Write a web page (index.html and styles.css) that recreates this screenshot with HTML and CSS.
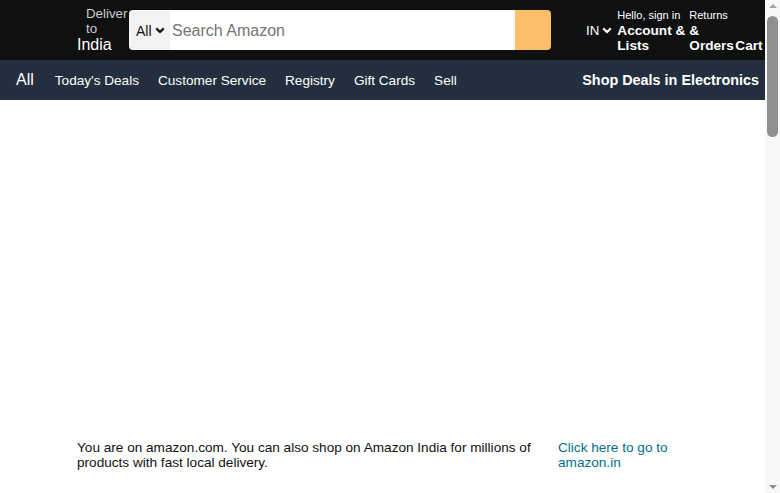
FILE: index.html
```html
<!DOCTYPE html>
<html lang="en">
<head>
<meta charset="utf-8">
<title>Amazon</title>
<link rel="stylesheet" href="styles.css">
</head>
<body>
<div class="viewport">
<div class="page">
<header class="top">
  <div class="deliver">
    <div class="deliver-line1">Deliver to</div>
    <div class="deliver-line2">India</div>
  </div>
  <form class="search">
    <div class="search-dept">All
      <svg class="chev" width="10" height="7" viewBox="0 0 10 7"><path d="M1.2 1.4 L5 5 L8.8 1.4" fill="none" stroke="#111" stroke-width="2.2"/></svg>
    </div>
    <input class="search-input" type="text" placeholder="Search Amazon">
    <div class="search-btn"></div>
  </form>
  <div class="lang">IN
    <svg class="chev" width="10" height="7" viewBox="0 0 10 7"><path d="M1.2 1.4 L5 5 L8.8 1.4" fill="none" stroke="#fff" stroke-width="2.2"/></svg>
  </div>
  <div class="tool account">
    <span class="tool-small">Hello, sign in</span>
    <span class="tool-big">Account &amp; Lists</span>
  </div>
  <div class="tool returns">
    <span class="tool-small">Returns</span>
    <span class="tool-big">&amp; Orders</span>
  </div>
  <div class="cart">Cart</div>
</header>
<nav class="subnav">
  <span class="nav-all">All</span>
  <a class="nav-link">Today's Deals</a>
  <a class="nav-link">Customer Service</a>
  <a class="nav-link">Registry</a>
  <a class="nav-link">Gift Cards</a>
  <a class="nav-link">Sell</a>
  <span class="nav-promo">Shop Deals in Electronics</span>
</nav>
<main class="main">
  <section class="redirect">
    <p class="redirect-text">You are on amazon.com. You can also shop on Amazon India for millions of products with fast local delivery.</p>
    <a class="redirect-link">Click here to go to amazon.in</a>
  </section>
</main>
</div>
<div class="scrollbar">
  <span class="sb-btn sb-up"></span>
  <div class="sb-track"><div class="sb-thumb"></div></div>
  <span class="sb-btn sb-down"></span>
</div>
</div>
</body>
</html>
```
FILE: styles.css
```css
html, body {
  margin: 0;
  padding: 0;
  height: 100%;
  overflow: hidden;
}
body {
  font-family: "Liberation Sans", Arial, sans-serif;
  background: #fff;
}
.viewport {
  display: flex;
  height: 100vh;
  overflow: hidden;
}
.page {
  flex: 1;
  min-width: 0;
  overflow: hidden;
}
.scrollbar {
  width: 15px;
  flex: none;
  background: #f8f8f8;
  display: flex;
  flex-direction: column;
}
.sb-btn {
  height: 15px;
  flex: none;
  display: flex;
  justify-content: center;
  padding-left: 1px;
}
.sb-up {
  align-items: flex-start;
  padding-top: 4px;
  box-sizing: border-box;
}
.sb-down {
  align-items: flex-end;
  padding-bottom: 4px;
  box-sizing: border-box;
}
.sb-up::before {
  content: "";
  border-left: 4px solid transparent;
  border-right: 4px solid transparent;
  border-bottom: 4px solid #a3a3a3;
}
.sb-down::before {
  content: "";
  border-left: 4px solid transparent;
  border-right: 4px solid transparent;
  border-top: 4px solid #8f8f8f;
}
.sb-track {
  flex: 1;
  padding: 1px 2px 0;
}
.sb-thumb {
  height: 121px;
  background: #8f8f8f;
  border-radius: 6px;
}
.top {
  height: 60px;
  background: #0f1111;
  display: flex;
  align-items: center;
  padding-left: 77px;
  box-sizing: border-box;
  color: #fff;
}
.deliver {
  width: 52px;
  flex: none;
  margin-top: -1px;
}
.deliver-line1 {
  padding-left: 9px;
  font-size: 13.3px;
  line-height: 15px;
  color: #ccc;
}
.deliver-line2 {
  font-size: 16px;
  line-height: 18px;
  color: #fff;
}
.search {
  display: flex;
  width: 422px;
  height: 40px;
  margin: 0;
  border-radius: 4px;
  overflow: hidden;
  flex: none;
}
.search-dept {
  width: 41px;
  background: #f3f3f3;
  color: #111;
  font-size: 14px;
  display: flex;
  align-items: center;
  padding-left: 7px;
  box-sizing: border-box;
  gap: 3px;
  padding-top: 1px;
}
.search-input {
  flex: 1;
  min-width: 0;
  border: none;
  outline: none;
  margin: 0;
  padding: 1px 0 0 2px;
  font-family: "Liberation Sans", Arial, sans-serif;
  font-size: 16px;
  color: #111;
  background: #fff;
}
.search-input::placeholder {
  color: #757575;
}
.search-btn {
  width: 36px;
  background: #febd69;
}
.lang {
  margin-left: 35px;
  font-size: 13.3px;
  display: flex;
  align-items: center;
  gap: 3px;
  flex: none;
}
.tool {
  display: flex;
  flex-direction: column;
  flex: none;
}
.account {
  margin-left: 5px;
  width: 72px;
}
.returns {
  width: 46px;
}
.tool-small {
  font-size: 11px;
  line-height: 15px;
}
.tool-big {
  font-size: 13.6px;
  font-weight: bold;
  line-height: 15px;
}
.cart {
  align-self: flex-end;
  margin-bottom: 7px;
  font-size: 13.6px;
  font-weight: bold;
  line-height: 15px;
}
.subnav {
  height: 40px;
  background: #232f3e;
  display: flex;
  align-items: center;
  padding: 0 6px 0 16px;
  color: #fff;
  gap: 19px;
}
.nav-all {
  font-size: 16px;
  margin-right: 2px;
}
.nav-link {
  font-size: 13.6px;
  color: #fff;
}
.nav-promo {
  margin-left: auto;
  font-size: 14.4px;
  font-weight: bold;
}
.main {
  padding: 340px 0 0 77px;
}
.redirect {
  display: flex;
  gap: 11px;
}
.redirect-text {
  margin: 0;
  width: 470px;
  font-size: 13.6px;
  line-height: 15px;
  color: #0f1111;
}
.redirect-link {
  width: 140px;
  font-size: 13.6px;
  line-height: 15px;
  color: #007185;
}
```
